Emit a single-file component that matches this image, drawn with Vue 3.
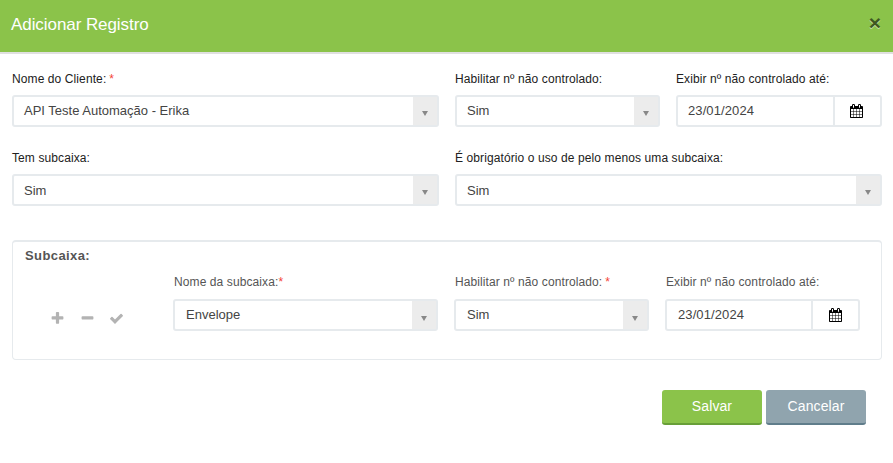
<script setup>
import { h } from 'vue'

const paths = {
  plus: 'M1600 736v192q0 40-28 68t-68 28h-416v416q0 40-28 68t-68 28h-192q-40 0-68-28t-28-68v-416h-416q-40 0-68-28t-28-68v-192q0-40 28-68t68-28h416v-416q0-40 28-68t68-28h192q40 0 68 28t28 68v416h416q40 0 68 28t28 68z',
  minus: 'M1600 736v192q0 40-28 68t-68 28h-1216q-40 0-68-28t-28-68v-192q0-40 28-68t68-28h1216q40 0 68 28t28 68z',
  check: 'M1671 566q0 40-28 68l-724 724-136 136q-28 28-68 28t-68-28l-136-136-362-362q-28-28-28-68t28-68l136-136q28-28 68-28t68 28l294 295 656-657q28-28 68-28t68 28l136 136q28 28 28 68z',
  calendar: 'M192 1664h288v-288h-288v288zm352 0h320v-288h-320v288zm-352-352h288v-320h-288v320zm352 0h320v-320h-320v320zm-352-384h288v-288h-288v288zm736 736h320v-288h-320v288zm-384-736h320v-288h-320v288zm768 736h288v-288h-288v288zm-384-352h320v-320h-320v320zm-352-864v-288q0-13-9.5-22.5t-22.5-9.5h-64q-13 0-22.5 9.5t-9.5 22.5v288q0 13 9.5 22.5t22.5 9.5h64q13 0 22.5-9.5t9.5-22.5zm736 864h288v-320h-288v320zm-384-384h320v-288h-320v288zm384 0h288v-288h-288v288zm32-480v-288q0-13-9.5-22.5t-22.5-9.5h-64q-13 0-22.5 9.5t-9.5 22.5v288q0 13 9.5 22.5t22.5 9.5h64q13 0 22.5-9.5t9.5-22.5zm384-64v1280q0 52-38 90t-90 38h-1408q-52 0-90-38t-38-90v-1280q0-52 38-90t90-38h128v-96q0-66 47-113t113-47h64q66 0 113 47t47 113v96h384v-96q0-66 47-113t113-47h64q66 0 113 47t47 113v96h128q52 0 90 38t38 90z'
}

const Icon = (props) =>
  h('svg', { viewBox: props.name === 'calendar' ? '64 0 1664 1792' : '0 0 1792 1792', 'aria-hidden': 'true' }, [h('path', { d: paths[props.name] })])
Icon.props = ['name']

const rows = [
  [
    { label: 'Nome do Cliente:', required: true, value: 'API Teste Automação - Erika', size: 'half' },
    { label: 'Habilitar nº não controlado:', value: 'Sim', size: 'quarter' },
    { label: 'Exibir nº não controlado até:', value: '23/01/2024', date: true, size: 'last' }
  ],
  [
    { label: 'Tem subcaixa:', value: 'Sim', size: 'half' },
    { label: 'É obrigatório o uso de pelo menos uma subcaixa:', value: 'Sim', size: 'half' }
  ]
]
const subFields = [
  { label: 'Nome da subcaixa:', required: true, tight: true, value: 'Envelope', size: 'name' },
  { label: 'Habilitar nº não controlado:', required: true, value: 'Sim', size: 'small' },
  { label: 'Exibir nº não controlado até:', value: '23/01/2024', date: true, size: 'small' }
]
const actions = ['plus', 'minus', 'check']
</script>

<template>
  <div class="dialog">
    <header class="header">
      <h1>Adicionar Registro</h1>
      <button class="close">×</button>
    </header>
    <main class="body">
      <div v-for="(row, i) in rows" :key="i" class="row">
        <div v-for="f in row" :key="f.label" class="field" :class="f.size">
          <label>{{ f.label }}<span v-if="f.required" class="req gap">*</span></label>
          <div class="control">
            <span class="value" :class="{ datevalue: f.date }">{{ f.value }}</span>
            <span v-if="f.date" class="date"><Icon name="calendar" class="cal" /></span>
            <span v-else class="arrow"><i></i></span>
          </div>
        </div>
      </div>
      <section class="panel">
        <h2>Subcaixa:</h2>
        <div class="subrow">
          <div class="actions">
            <Icon v-for="a in actions" :key="a" :name="a" class="act" />
          </div>
          <div v-for="f in subFields" :key="f.label" class="field" :class="f.size">
            <label>{{ f.label }}<span v-if="f.required" class="req" :class="{ gap: !f.tight }">*</span></label>
            <div class="control">
              <span class="value" :class="{ datevalue: f.date }">{{ f.value }}</span>
              <span v-if="f.date" class="date"><Icon name="calendar" class="cal" /></span>
              <span v-else class="arrow"><i></i></span>
            </div>
          </div>
        </div>
      </section>
      <footer class="footer">
        <button class="btn save">Salvar</button>
        <button class="btn cancel">Cancelar</button>
      </footer>
    </main>
  </div>
</template>

<style>
body { background: #fff; }
</style>

<style scoped>
* { box-sizing: border-box; }
.dialog { height: 463px; overflow: hidden; font-family: "Liberation Sans", Arial, sans-serif; color: #212121; }
.header { height: 54px; padding: 0 12px 4px 11px; display: flex; justify-content: space-between; align-items: center; background: #8bc34a; border-bottom: 2px solid #e0e0e0; }
h1 { margin: 0; padding-top: 2px; font-size: 17px; font-weight: 400; line-height: 20px; letter-spacing: -.07px; color: #fff; }
.close { border: 0; padding: 0; margin-top: -2px; background: none; font: 700 21px/20px "Liberation Sans", Arial, sans-serif; color: #000; text-shadow: 0 1px 0 #fff; opacity: .55; }
.body { padding: 16px 11px 0 12px; }
.row { display: flex; gap: 16px; height: 79px; }
.half { width: 427px; }
.quarter { width: 205px; }
.last { width: 206px; }
.name { width: 265px; }
.small { width: 195px; }
label { display: block; height: 25px; padding-top: 1px; font-size: 12px; line-height: 17px; white-space: nowrap; letter-spacing: .1px; }
.panel label { padding: 0 0 0 1px; }
.req { color: #f44336; }
.gap { margin-left: 3px; }
.control { display: flex; height: 32px; border: 2px solid #e6eaed; border-radius: 3px; background: #fff; }
.value { flex: 1; padding-left: 10px; font-size: 13px; line-height: 27px; color: #444; white-space: nowrap; }
.datevalue { letter-spacing: .1px; }
.row + .row .value { line-height: 29px; }
.panel .value { padding-left: 11px; }
.arrow { width: 24px; background: #ececec; display: flex; justify-content: center; padding-top: 14px; }
.panel .arrow { padding-top: 15px; }
.arrow i { width: 0; height: 0; border: 3px solid transparent; border-top: 5px solid #888; border-bottom: 0; }
.date { width: 47px; border-left: 2px solid #e6eaed; padding: 7px 0 0 15px; }
.panel .date { padding-left: 16px; }
.cal { display: block; width: 13px; height: 14px; fill: #000; }
.panel { margin-top: 12px; height: 120px; border: 1px solid #e6eaed; border-top-width: 2px; border-radius: 4px; color: #555; }
h2 { margin: 0; padding: 5px 0 0 12px; font-size: 13px; line-height: 18px; font-weight: 700; letter-spacing: .4px; }
.subrow { display: flex; gap: 16px; padding-top: 9px; }
.actions { width: 144px; padding: 37px 0 0 37px; display: flex; gap: 14.5px; }
.act { width: 15px; height: 15px; fill: #b3b3b3; flex: none; }
.footer { display: flex; justify-content: flex-end; gap: 4px; padding: 30px 16px 0 0; }
.btn { width: 100px; height: 35px; padding: 0 0 1px; border: 0; border-bottom: 2px solid #689f38; border-radius: 3px; font: 14px "Liberation Sans", Arial, sans-serif; color: #fff; letter-spacing: .1px; }
.save { background: #8bc34a; }
.cancel { background: #90a4ae; border-bottom-color: #607d8b; }
</style>
